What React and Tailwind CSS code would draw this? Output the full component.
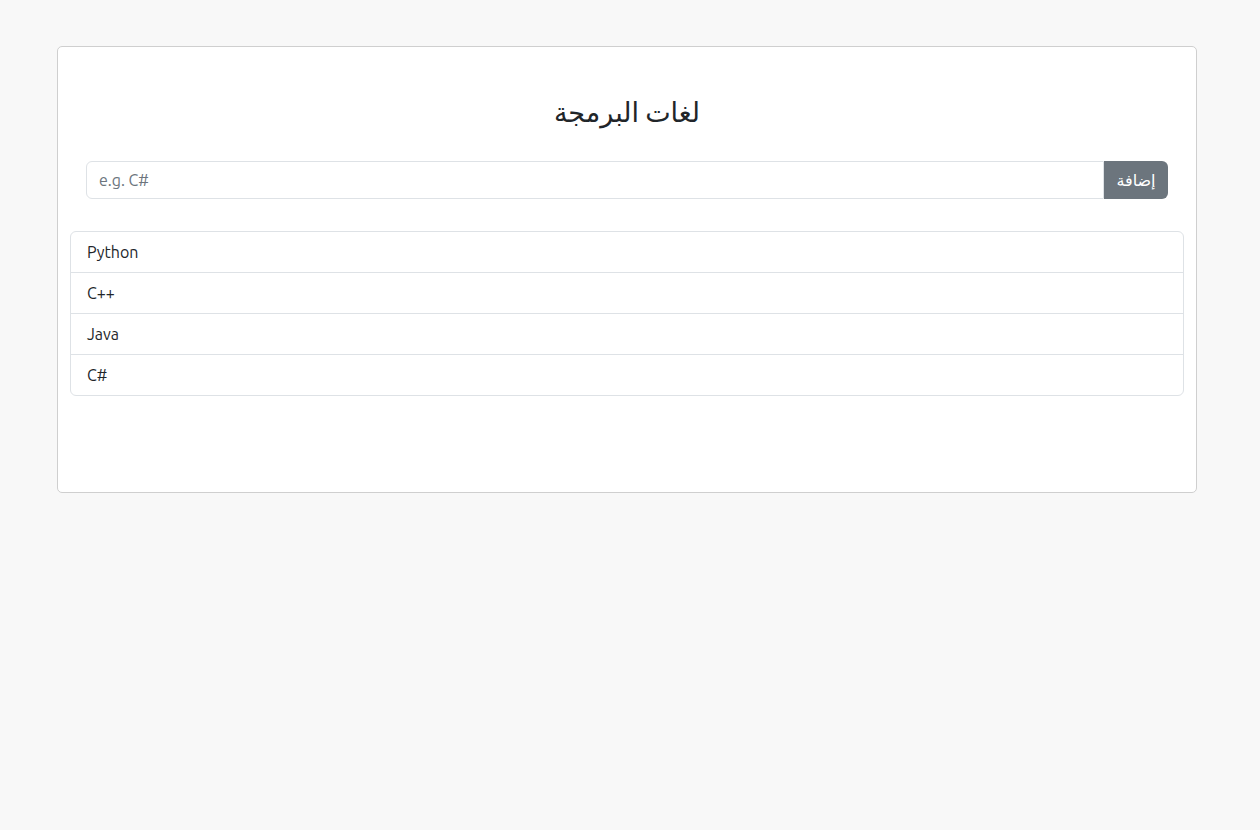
import React, { useState } from 'react';

const App = () => {
  const [langs, setLangs] = useState(['Python', 'C++', 'Java', 'C#']);
  const [value, setValue] = useState('');

  const addLang = () => {
    if (value.trim()) {
      setLangs([...langs, value.trim()]);
      setValue('');
    }
  };

  return (
    <div className="min-h-[830px] bg-[#f8f8f8] pt-[46px] pl-[57px] text-[#212529] [font-family:Ubuntu,'Noto_Sans','DejaVu_Sans',sans-serif]">
      <div className="w-[1140px] bg-white border border-[#cfcfcf] rounded-[5px] h-[447px] px-3 pt-[46px]">
        {/* Title */}
        <h1 className="text-center text-[27px] leading-[38px] font-normal">لغات البرمجة</h1>

        {/* Add form */}
        <div className="flex mt-[30px] px-4">
          <input
            type="text"
            placeholder="e.g. C#"
            value={value}
            onChange={(e) => setValue(e.target.value)}
            className="flex-1 h-[38px] border border-[#dee2e6] rounded-l-[6px] px-3 text-base text-[#212529] placeholder-[#6c757d] focus:outline-none"
          />
          <button
            onClick={addLang}
            className="h-[38px] w-[64px] bg-[#6c757d] text-white text-base rounded-r-[6px]"
          >
            إضافة
          </button>
        </div>

        {/* List */}
        <ul className="mt-[32px] border border-[#dee2e6] rounded-[6px]">
          {langs.map((lang, i) => (
            <li
              key={i}
              className={`h-[40px] box-content flex items-center px-4 text-base ${i > 0 ? 'border-t border-[#dee2e6]' : ''}`}
            >
              {lang}
            </li>
          ))}
        </ul>
      </div>
    </div>
  );
};

export default App;
